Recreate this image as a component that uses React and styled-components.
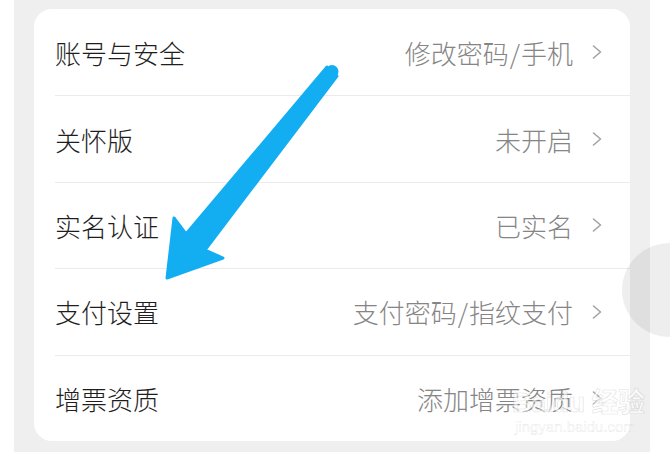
import React from 'react'
import styled, { createGlobalStyle } from 'styled-components'

const Global = createGlobalStyle`
  html, body {
    margin: 0;
    padding: 0;
    background: #ffffff;
  }
  body {
    font-family: "Noto Sans CJK SC", "Noto Sans", sans-serif;
  }
`

const Screen = styled.div`
  position: relative;
  width: 670px;
  height: 452px;
  overflow: hidden;
  display: flex;
`

const Panel = styled.div`
  margin: 0 20px 0 14px;
  flex: 1;
  background: #efefef;
  padding: 9px 20px 11px 20px;
`

const Card = styled.div`
  background: #ffffff;
  border-radius: 18px;
  padding-left: 21px;
`

const Row = styled.div`
  height: 86.4px;
  display: flex;
  align-items: center;
  padding-right: 28px;
  border-top: ${p => (p.first ? 'none' : '1px solid #ebebeb')};
  box-sizing: border-box;
`

const Label = styled.div`
  flex: 1;
  font-size: 26px;
  font-weight: 300;
  color: #1e1e1e;
`

const Value = styled.div`
  font-size: 26px;
  font-weight: 300;
  color: #858585;
  margin-right: 19px;
`

const Slash = styled.span`
  margin: 0 1px;
`

const Chevron = () => (
  <svg width="10" height="14" viewBox="0 0 10 14">
    <polyline points="1.5,1 8.5,7 1.5,13" fill="none" stroke="#a3a3a3" strokeWidth="1.6" strokeLinecap="round" strokeLinejoin="round" />
  </svg>
)

const Arrow = styled.svg`
  position: absolute;
  left: 0;
  top: 0;
  pointer-events: none;
`

const Floater = styled.div`
  position: absolute;
  left: 622px;
  top: 243px;
  width: 96px;
  height: 94px;
  border-radius: 50%;
  background: rgba(0, 0, 0, 0.065);
`

const Mark = styled.div`
  position: absolute;
  left: 512px;
  top: 388px;
  display: flex;
  flex-direction: column;
  align-items: flex-start;
  color: rgba(255, 255, 255, 0.6);
  -webkit-text-stroke: 1px rgba(0, 0, 0, 0.1);
  font-family: "Liberation Sans", "Noto Sans CJK SC", sans-serif;
  pointer-events: none;
`

const MarkTop = styled.div`
  font-size: 27px;
  font-weight: 700;
  line-height: 30px;
  letter-spacing: -0.5px;
`

const MarkBottom = styled.div`
  font-size: 15px;
  line-height: 17px;
  margin-left: 3px;
  -webkit-text-stroke: 0.6px rgba(0, 0, 0, 0.1);
`

const rows = [
  { label: '账号与安全', value: ['修改密码', '手机'] },
  { label: '关怀版', value: ['未开启'] },
  { label: '实名认证', value: ['已实名'] },
  { label: '支付设置', value: ['支付密码', '指纹支付'] },
  { label: '增票资质', value: ['添加增票资质'] },
]

export default function App() {
  return (
    <Screen>
      <Global />
      <Panel>
        <Card>
          {rows.map((r, i) => (
            <Row key={r.label} first={i === 0}>
              <Label>{r.label}</Label>
              <Value>
                {r.value[0]}
                {r.value[1] && (
                  <>
                    <Slash>/</Slash>
                    {r.value[1]}
                  </>
                )}
              </Value>
              <Chevron />
            </Row>
          ))}
        </Card>
      </Panel>
      <Floater />
      <Mark>
        <MarkTop>Baidu 经验</MarkTop>
        <MarkBottom>jingyan.baidu.com</MarkBottom>
      </Mark>
      <Arrow width="670" height="452" viewBox="0 0 670 452">
        <polygon
          points="327,67 337,76 205,250 223,258 167,278 174,218 186,234"
          fill="#13adf2"
          stroke="#13adf2"
          strokeWidth="3"
          strokeLinejoin="round"
        />
        <circle cx="332" cy="71.5" r="6.5" fill="#13adf2" />
      </Arrow>
    </Screen>
  )
}
